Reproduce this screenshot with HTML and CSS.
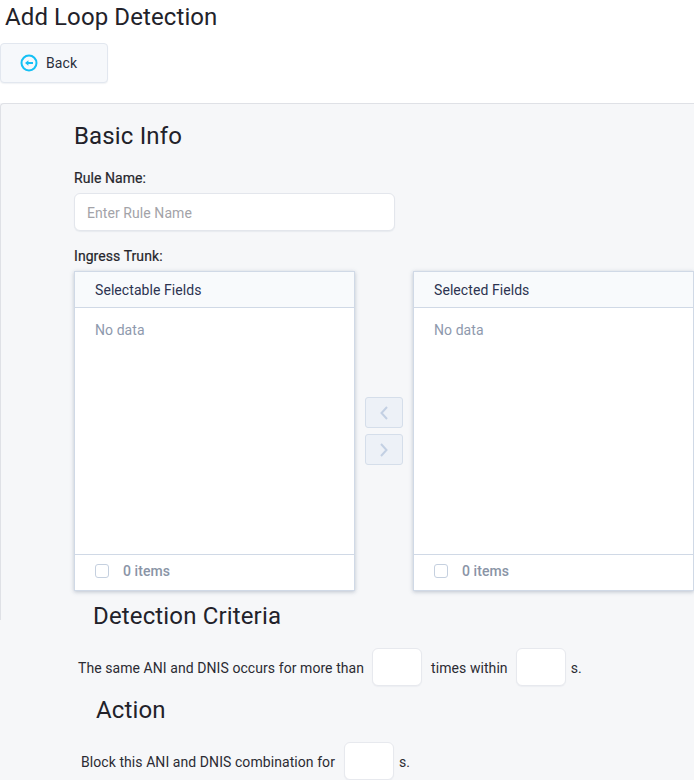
FILE: index.html
```html
<!DOCTYPE html>
<html lang="en">
<head>
    <meta charset="UTF-8">
    <title>Add Loop Detection</title>
    <link rel="stylesheet" href="styles.css">
</head>
<body>
    <h1 class="page-title">Add Loop Detection</h1>
    <button class="back-btn" type="button">
        <svg class="back-icon" width="18" height="18" viewBox="0 0 18 18">
            <circle cx="9" cy="9" r="7.5" fill="none" stroke="#14c0f5" stroke-width="2"/>
            <path d="M5 9l3.400-2.800v1.800H13v2H8.400v1.800z" fill="#14c0f5"/>
        </svg>
        <span>Back</span>
    </button>

    <div class="panel">
        <div class="basic-info">
            <h2 class="section-title">Basic Info</h2>
            <label class="field-label name-label">Rule Name:</label>
            <input class="text-input" type="text" placeholder="Enter Rule Name">
            <label class="field-label trunk-label">Ingress Trunk:</label>

            <div class="transfer">
                <div class="transfer-list">
                    <div class="transfer-head">Selectable Fields</div>
                    <div class="transfer-body">No data</div>
                    <div class="transfer-foot"><span class="check"></span><span>0 items</span></div>
                </div>
                <div class="transfer-ops">
                    <button class="op-btn" type="button">
                        <svg width="10" height="14" viewBox="0 0 10 14"><path d="M8 1L2.500 7 8 13" fill="none" stroke="#c3d0e3" stroke-width="2"/></svg>
                    </button>
                    <button class="op-btn" type="button">
                        <svg width="10" height="14" viewBox="0 0 10 14"><path d="M2 1l5.500 6L2 13" fill="none" stroke="#c3d0e3" stroke-width="2"/></svg>
                    </button>
                </div>
                <div class="transfer-list">
                    <div class="transfer-head">Selected Fields</div>
                    <div class="transfer-body">No data</div>
                    <div class="transfer-foot"><span class="check"></span><span>0 items</span></div>
                </div>
            </div>
        </div>

        <h2 class="section-title criteria-title">Detection Criteria</h2>
        <div class="rule-line criteria-line">
            <span>The same ANI and DNIS occurs for more than</span>
            <input class="num-input" type="text">
            <span>times within</span>
            <input class="num-input" type="text">
            <span>s.</span>
        </div>

        <h2 class="section-title action-title">Action</h2>
        <div class="rule-line action-line">
            <span>Block this ANI and DNIS combination for</span>
            <input class="num-input" type="text">
            <span>s.</span>
        </div>
    </div>
</body>
</html>
```

FILE: styles.css
```css
* {
    box-sizing: border-box;
}
body {
    margin: 0;
    height: 780px;
    overflow: hidden;
    background: #fff;
    font-family: Roboto, sans-serif;
    font-size: 14px;
    letter-spacing: 0.07px;
    color: #2b2b33;
}
.page-title {
    margin: 0;
    padding: 3px 0 0 5px;
    height: 43px;
    font-size: 24px;
    line-height: 28px;
    font-weight: 400;
    letter-spacing: 0.1px;
    color: #22222a;
}
.back-btn {
    display: flex;
    align-items: center;
    gap: 8px;
    width: 108px;
    height: 40px;
    padding: 0 0 0 20px;
    background: #f6f8fb;
    border: 1px solid #e2e7ef;
    border-radius: 4px;
    box-shadow: 0 1px 1px rgba(80, 100, 130, 0.08);
    font-family: inherit;
    font-size: 14px;
    letter-spacing: inherit;
    color: #2b2f3c;
}
.back-icon {
    margin-left: -1px;
}
.panel {
    position: relative;
    margin-top: 20px;
    height: 677px;
    background: #f6f7f9;
}
.panel::before {
    content: "";
    position: absolute;
    left: 0;
    top: 0;
    right: 0;
    height: 516px;
    border-top: 1px solid #dfe1e6;
    border-left: 1px solid #dfe1e6;
    border-top-left-radius: 4px;
}
.basic-info {
    position: relative;
    padding: 19px 0 0 74px;
}
.section-title {
    margin: 0;
    font-size: 24px;
    line-height: 28px;
    font-weight: 400;
    letter-spacing: 0.15px;
    color: #22222a;
}
.field-label {
    display: block;
    font-size: 14px;
    line-height: 16px;
    font-weight: 400;
    -webkit-text-stroke: 0.2px #26262c;
    color: #26262c;
}
.name-label {
    margin-top: 20px;
}
.trunk-label {
    margin-top: 17px;
}
.text-input {
    display: block;
    width: 321px;
    height: 38px;
    margin-top: 7px;
    padding: 2px 12px 0;
    background: #fff;
    border: 1px solid #e3e6ec;
    border-radius: 6px;
    box-shadow: 0 1px 1px rgba(80, 100, 130, 0.08);
    font-family: inherit;
    font-size: 14px;
    letter-spacing: inherit;
}
.text-input::placeholder {
    color: #a3a3a8;
}
.transfer {
    display: flex;
    align-items: center;
    margin-top: 7px;
}
.transfer-list {
    display: flex;
    flex-direction: column;
    flex: none;
    width: 281px;
    height: 320px;
    background: #fff;
    border: 1px solid #d0d9e6;
    box-shadow: 0 1px 4px rgba(80, 100, 130, 0.35);
}
.transfer-head {
    height: 36px;
    padding-left: 20px;
    background: #f8fafc;
    border-bottom: 1px solid #d0d9e6;
    line-height: 37px;
    color: #2c3350;
}
.transfer-body {
    flex: 1;
    padding: 14px 20px;
    line-height: 16px;
    color: #8e99ad;
}
.transfer-foot {
    display: flex;
    align-items: center;
    gap: 14px;
    height: 36px;
    padding: 0 0 3px 20px;
    border-top: 1px solid #d0d9e6;
    font-weight: 500;
    color: #8a94a6;
}
.check {
    width: 14px;
    height: 14px;
    background: #fff;
    border: 1px solid #c5d0df;
    border-radius: 3px;
}
.transfer-ops {
    display: flex;
    flex-direction: column;
    align-items: center;
    gap: 6px;
    width: 58px;
    flex: none;
}
.op-btn {
    display: flex;
    align-items: center;
    justify-content: center;
    width: 38px;
    height: 31px;
    padding: 0;
    background: #edf1f7;
    border: 1px solid #d5deea;
    border-radius: 3px;
}
.criteria-title {
    position: relative;
    margin: 11px 0 0 93px;
}
.action-title {
    margin: 10px 0 0 96px;
}
.rule-line {
    display: flex;
    align-items: center;
    height: 38px;
    color: #2b2b33;
}
.rule-line span {
    position: relative;
    top: 1px;
}
.criteria-line {
    margin: 18px 0 0 78px;
}
.action-line {
    margin: 18px 0 0 81px;
}
.num-input {
    width: 50px;
    height: 38px;
    background: #fff;
    border: 1px solid #e7e9ee;
    border-radius: 6px;
    box-shadow: 0 1px 1px rgba(80, 100, 130, 0.06);
}
.criteria-line .num-input {
    margin: 0 9px 0 8px;
}
.criteria-line .num-input:nth-of-type(2) {
    margin-right: 5px;
}
.action-line .num-input {
    margin: 0 5px 0 9px;
}
```
